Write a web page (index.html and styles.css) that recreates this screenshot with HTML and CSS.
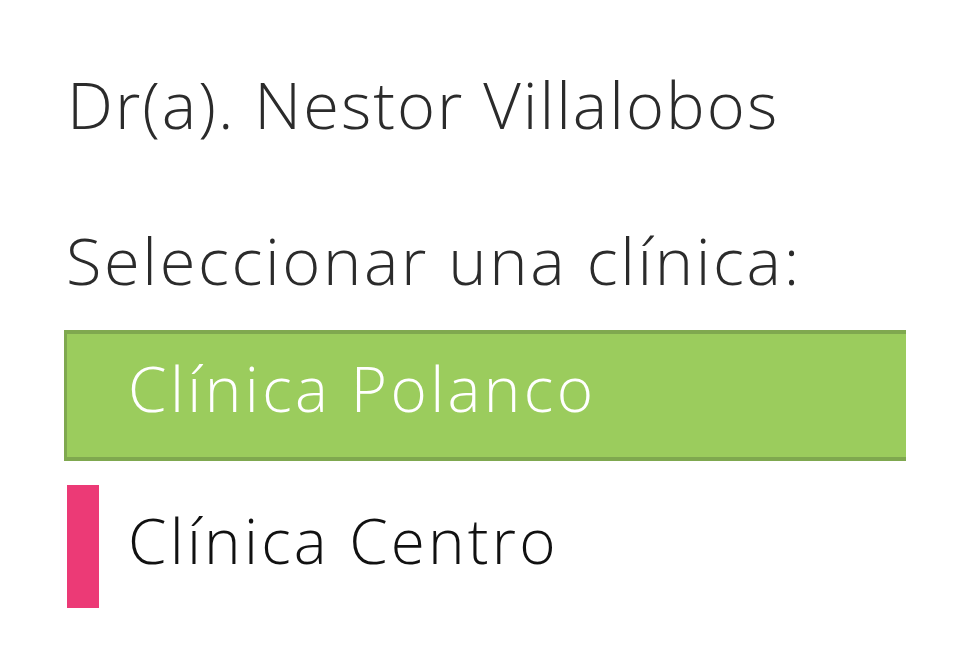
FILE: index.html
```html
<!DOCTYPE html>
<html lang="es">
<head>
<meta charset="utf-8">
<title>Seleccionar clínica</title>
<link rel="stylesheet" href="styles.css">
</head>
<body>
<main class="page">
  <h1 class="doctor">Dr(a). Nestor Villalobos</h1>
  <p class="prompt">Seleccionar una clínica:</p>
  <ul class="clinics">
    <li class="clinic clinic--selected"><span class="clinic-name">Clínica Polanco</span></li>
    <li class="clinic"><span class="clinic-mark"></span><span class="clinic-name">Clínica Centro</span></li>
  </ul>
</main>
</body>
</html>
```
FILE: styles.css
```css
html, body {
  margin: 0;
  padding: 0;
  background: #ffffff;
}
body {
  font-family: "Open Sans", "Lato", sans-serif;
  font-weight: 300;
  color: #2b2b2b;
}
.page {
  padding: 64px 66px 0 64px;
  display: flex;
  flex-direction: column;
}
.doctor {
  margin: 0 0 0 3px;
  font-size: 65px;
  font-weight: 300;
  line-height: 80px;
  letter-spacing: 2px;
}
.prompt {
  margin: 76px 0 0 2px;
  font-size: 65px;
  line-height: 80px;
  letter-spacing: 2.6px;
}
.clinics {
  list-style: none;
  margin: 30px 0 0 0;
  padding: 0;
  display: flex;
  flex-direction: column;
  gap: 20px;
}
.clinic {
  display: flex;
  align-items: center;
  height: 131px;
  box-sizing: border-box;
  font-size: 62px;
  letter-spacing: 3.2px;
  color: #111111;
}
.clinic--selected {
  background: #9bcc5d;
  border-top: 4px solid #7fa84f;
  border-bottom: 4px solid #7fa84f;
  border-left: 3px solid #7fa84f;
  color: #ffffff;
  padding-left: 61px;
  letter-spacing: 3.4px;
}
.clinic--selected .clinic-name {
  padding-bottom: 16px;
}
.clinic-mark {
  width: 32px;
  height: 123px;
  margin-left: 3px;
  margin-right: 29px;
  background: #ec3a76;
}
.clinic-name {
  line-height: 1;
  padding-bottom: 14px;
}
```
